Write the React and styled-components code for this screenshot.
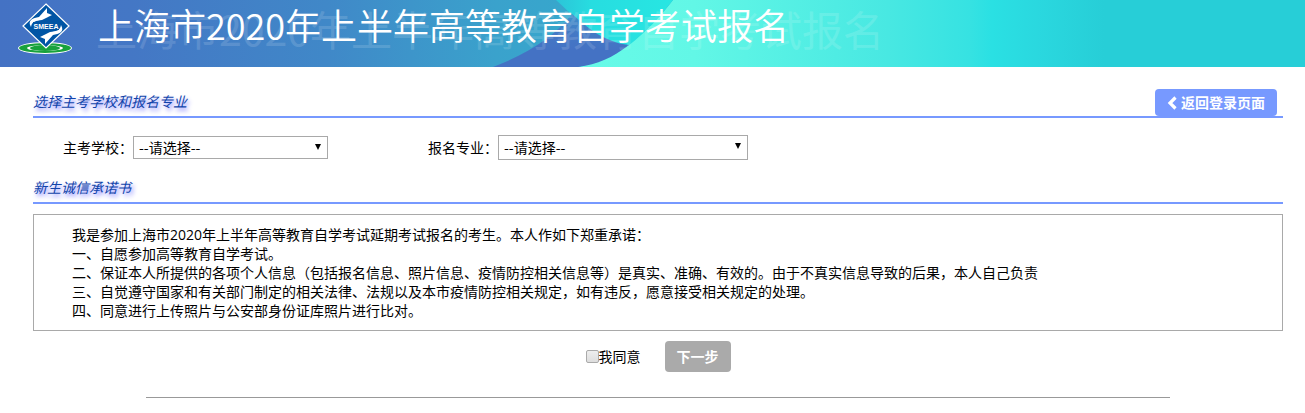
import React, { useState } from "react";
import styled, { createGlobalStyle } from "styled-components";

const TITLE = "上海市2020年上半年高等教育自学考试报名";

const PLEDGE = [
  "我是参加上海市2020年上半年高等教育自学考试延期考试报名的考生。本人作如下郑重承诺：",
  "一、自愿参加高等教育自学考试。",
  "二、保证本人所提供的各项个人信息（包括报名信息、照片信息、疫情防控相关信息等）是真实、准确、有效的。由于不真实信息导致的后果，本人自己负责",
  "三、自觉遵守国家和有关部门制定的相关法律、法规以及本市疫情防控相关规定，如有违反，愿意接受相关规定的处理。",
  "四、同意进行上传照片与公安部身份证库照片进行比对。",
];

function BannerArt() {
  return (
    <BannerSvg viewBox="0 0 1305 67" preserveAspectRatio="none" aria-hidden="true">
      <defs>
        <linearGradient id="base" x1="0" x2="1305" y1="0" y2="0" gradientUnits="userSpaceOnUse">
          <stop offset="0" stopColor="#4472c4" />
          <stop offset="0.1" stopColor="#4477c5" />
          <stop offset="0.25" stopColor="#4088c8" />
          <stop offset="0.38" stopColor="#3aa2cc" />
          <stop offset="0.45" stopColor="#36a8cc" />
        </linearGradient>
        <linearGradient id="light" x1="560" x2="1305" y1="0" y2="0" gradientUnits="userSpaceOnUse">
          <stop offset="0" stopColor="#68fbe8" />
          <stop offset="0.18" stopColor="#62f7e6" />
          <stop offset="0.44" stopColor="#48e8e2" />
          <stop offset="0.55" stopColor="#36e2e2" />
          <stop offset="0.58" stopColor="#2ae0e3" />
          <stop offset="0.64" stopColor="#2ad8df" />
          <stop offset="0.73" stopColor="#27ced7" />
          <stop offset="1" stopColor="#27ced7" />
        </linearGradient>
        <linearGradient id="swoosh" x1="556" x2="673" y1="0" y2="0" gradientUnits="userSpaceOnUse">
          <stop offset="0" stopColor="#2cc4d8" />
          <stop offset="0.3" stopColor="#27dde0" />
          <stop offset="1" stopColor="#27e6e2" />
        </linearGradient>
        <linearGradient id="wave" x1="0" x2="0" y1="12" y2="50" gradientUnits="userSpaceOnUse">
          <stop offset="0" stopColor="#3e92ca" />
          <stop offset="0.6" stopColor="#4478c5" />
          <stop offset="1" stopColor="#4472c4" />
        </linearGradient>
      </defs>
      <rect width="1305" height="67" fill="url(#base)" />
      <path d="M600 0H1305V67H578C620 58 650 30 673 0Z" fill="url(#light)" />
      <path d="M556 0H673C660 17 646 32 628 46C604 44 586 28 556 0Z" fill="url(#swoosh)" />
      <path d="M493 67C530 53 556 35 572 14C588 28 604 42 629 45C612 58 598 64 578 67Z" fill="url(#wave)" />
    </BannerSvg>
  );
}

function Logo() {
  const arrow = "M13 24C9 17 15 15 21 14L29 5L29 10L34 12L24 17C18 18 14 18 13 24Z";
  return (
    <LogoSvg viewBox="0 0 54 51" role="img" aria-label="SMEEA">
      <ellipse cx="27" cy="45" rx="27" ry="6" fill="#fff" />
      <ellipse cx="27" cy="45" rx="26" ry="5" fill="#18a23c" />
      <ellipse cx="27" cy="45" rx="18" ry="3" fill="#fff" />
      <ellipse cx="27" cy="45" rx="15" ry="3" fill="#18a23c" />
      <path d="M28 1L51 23L28 45L5 23Z" fill="#0055a5" stroke="#fff" strokeWidth="1.2" />
      <path d={arrow} fill="#fff" />
      <path d={arrow} fill="#fff" transform="rotate(180 28 23)" />
      <rect x="15" y="19" width="26" height="8" fill="#0055a5" />
      <text x="28" y="26" textAnchor="middle" fontSize="7" fontWeight="700" fontFamily="Liberation Sans, sans-serif" fill="#fff">
        SMEEA
      </text>
    </LogoSvg>
  );
}

function App() {
  const [agreed, setAgreed] = useState(false);
  return (
    <>
      <GlobalStyle />
      <Banner>
        <BannerArt />
        <Logo />
        <Title>
          <TitleGhost aria-hidden="true">{TITLE}</TitleGhost>
          <TitleText>{TITLE}</TitleText>
        </Title>
      </Banner>
      <Content>
        <SectionHeader>
          <SectionTitle>选择主考学校和报名专业</SectionTitle>
          <BackLink href="#login">
            <svg width="10" height="14" viewBox="0 0 10 14" aria-hidden="true">
              <path d="M8.5 1.5L3 7L8.5 12.5" fill="none" stroke="#fff" strokeWidth="3.2" />
            </svg>
            返回登录页面
          </BackLink>
        </SectionHeader>
        <FieldRow>
          <Field>
            <label htmlFor="school">主考学校：</label>
            <SelectBox $width="195px">
              <Select id="school" $height="23px">
                <option>--请选择--</option>
              </Select>
              <Arrow />
            </SelectBox>
          </Field>
          <Field>
            <label htmlFor="major">报名专业：</label>
            <SelectBox $width="250px">
              <Select id="major" $height="25px">
                <option>--请选择--</option>
              </Select>
              <Arrow />
            </SelectBox>
          </Field>
        </FieldRow>
        <SectionHeader>
          <SectionTitle>新生诚信承诺书</SectionTitle>
        </SectionHeader>
        <Pledge>
          {PLEDGE.map((line) => (
            <p key={line}>{line}</p>
          ))}
        </Pledge>
        <Actions>
          <AgreeLabel>
            <Checkbox
              type="checkbox"
              checked={agreed}
              onChange={(e) => setAgreed(e.target.checked)}
            />
            我同意
          </AgreeLabel>
          <NextButton type="button">下一步</NextButton>
        </Actions>
        <FooterLine />
      </Content>
    </>
  );
}

export default App;

const GlobalStyle = createGlobalStyle`
  * {
    box-sizing: border-box;
  }
  body {
    margin: 0;
    background: #fff;
    color: #000;
    font-family: "Open Sans", "Noto Sans CJK SC", sans-serif;
    font-size: 14px;
    line-height: 19px;
  }
  p, h1, h2 {
    margin: 0;
    font-weight: normal;
  }
`;

const Banner = styled.header`
  position: relative;
  display: flex;
  align-items: flex-start;
  gap: 26px;
  height: 67px;
  padding: 3px 18px 0;
  overflow: hidden;
`;

const BannerSvg = styled.svg`
  position: absolute;
  inset: 0;
  width: 100%;
  height: 100%;
`;

const LogoSvg = styled.svg`
  position: relative;
  flex: none;
  width: 54px;
  height: 51px;
`;

const Title = styled.div`
  position: relative;
  color: #fff;
  font-family: "Noto Sans CJK SC", sans-serif;
  white-space: nowrap;
`;

const TitleText = styled.h1`
  position: relative;
  font-size: 36px;
  font-weight: 350;
  line-height: 42px;
`;

const TitleGhost = styled.span`
  position: absolute;
  top: 0;
  left: -2px;
  font-size: 41px;
  line-height: 50px;
  opacity: 0.13;
`;

const Content = styled.main`
  padding: 20px 22px 0 33px;
`;

const SectionHeader = styled.div`
  display: flex;
  align-items: center;
  justify-content: space-between;
  height: 31px;
  padding-right: 6px;
  border-bottom: 2px solid #7799ff;
`;

const SectionTitle = styled.h2`
  font-size: 14px;
  font-style: italic;
  color: #1144aa;
  text-shadow: 2px 3px 4px #8888ff;
`;

const BackLink = styled.a`
  display: flex;
  align-items: center;
  align-self: flex-end;
  gap: 4px;
  height: 27px;
  padding: 0 12px;
  border-radius: 4px;
  background: #7799ff;
  color: #fff;
  font-weight: bold;
  text-decoration: none;
`;

const FieldRow = styled.div`
  display: flex;
  align-items: center;
  gap: 100px;
  height: 55px;
  padding: 4px 30px 0;
`;

const Field = styled.div`
  display: flex;
  align-items: center;
`;

const SelectBox = styled.div`
  position: relative;
  width: ${(props) => props.$width};
`;

const Select = styled.select`
  display: block;
  width: 100%;
  height: ${(props) => props.$height};
  padding: 0 20px 0 5px;
  border: 1px solid #a9a9a9;
  border-radius: 0;
  background: #fff;
  color: #000;
  font: inherit;
  font-family: "Noto Sans CJK SC", sans-serif;
  appearance: none;
`;

const Arrow = styled.span`
  position: absolute;
  top: 8px;
  right: 7px;
  border: 3px solid transparent;
  border-top: 6px solid #000;
  border-bottom: 0;
  pointer-events: none;
`;

const Pledge = styled.section`
  margin-top: 10px;
  padding: 10px 38px;
  border: 1px solid #a9a9a9;
`;

const Actions = styled.div`
  display: flex;
  align-items: center;
  justify-content: center;
  gap: 24px;
  margin-top: 10px;
`;

const AgreeLabel = styled.label`
  display: flex;
  align-items: center;
`;

const Checkbox = styled.input`
  width: 13px;
  height: 13px;
  margin: 0;
  border: 1px solid #aaa;
  border-radius: 2px;
  background: linear-gradient(#eee, #ddd);
  appearance: none;

  &:checked {
    background: #7799ff;
  }
`;

const NextButton = styled.button`
  height: 31px;
  padding: 0 12px;
  border: none;
  border-radius: 4px;
  background: #aaa;
  color: #fff;
  font: inherit;
  font-weight: bold;
`;

const FooterLine = styled.hr`
  width: 1024px;
  max-width: 100%;
  margin: 25px auto 0;
  border: 0;
  border-top: 1px solid #999;
`;
